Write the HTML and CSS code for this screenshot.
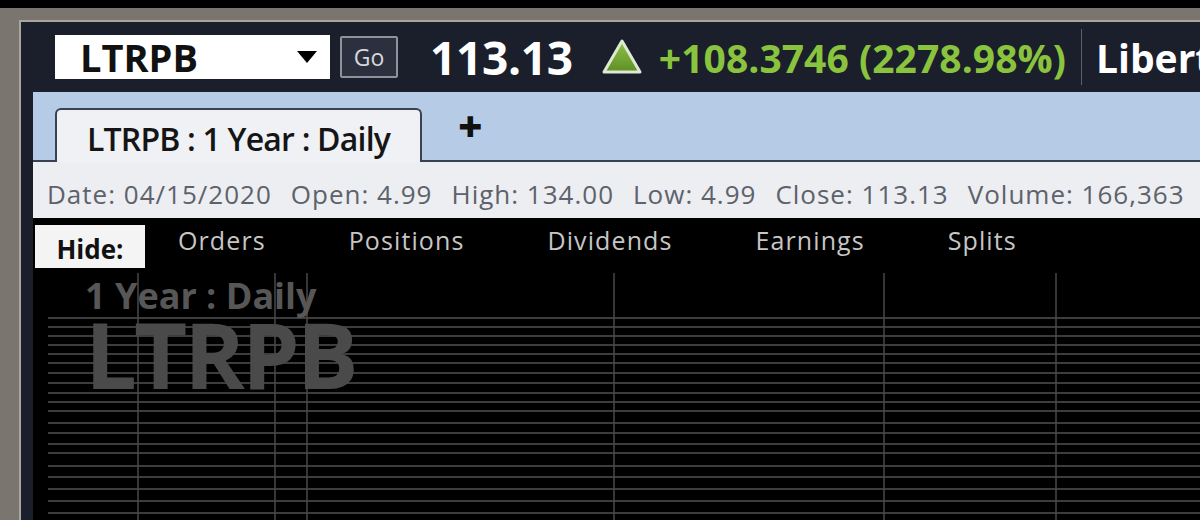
FILE: index.html
```html
<!DOCTYPE html>
<html>
<head>
<meta charset="utf-8">
<link rel="stylesheet" href="styles.css">
</head>
<body>
<div class="bezel">
  <div class="window">
    <div class="toolbar">
      <div class="symbol-box">
        <span class="symbol-text">LTRPB</span>
        <svg class="caret" width="22" height="14" viewBox="0 0 22 14"><path d="M1 1 L21 1 L11 13 Z" fill="#000"/></svg>
      </div>
      <div class="go-btn">Go</div>
      <div class="price">113.13</div>
      <svg class="up-icon" width="42" height="38" viewBox="0 0 42 38">
        <defs>
          <linearGradient id="g" x1="0" y1="0" x2="0" y2="1">
            <stop offset="0" stop-color="#8fc24a"/>
            <stop offset="1" stop-color="#5f8f26"/>
          </linearGradient>
        </defs>
        <path d="M21 3 L39 34 L3 34 Z" fill="url(#g)" stroke="#dfe8d2" stroke-width="3" stroke-linejoin="round"/>
      </svg>
      <div class="change">+108.3746 (2278.98%)</div>
      <div class="sep"></div>
      <div class="company">Liberty</div>
    </div>
    <div class="panel">
      <div class="tab-band">
        <div class="tab">LTRPB : 1 Year : Daily</div>
        <div class="add-tab">+</div>
      </div>
      <div class="info-bar">
        <span>Date: 04/15/2020</span>
        <span>Open: 4.99</span>
        <span>High: 134.00</span>
        <span>Low: 4.99</span>
        <span>Close: 113.13</span>
        <span>Volume: 166,363</span>
      </div>
      <div class="tools">
        <div class="hide-btn">Hide:</div>
        <div class="tool-items">
          <span>Orders</span>
          <span>Positions</span>
          <span>Dividends</span>
          <span>Earnings</span>
          <span>Splits</span>
        </div>
      </div>
      <div class="chart">
        <svg class="grid" width="1167" height="248" viewBox="0 0 1167 248">
          <g stroke="#3d3d3d" stroke-width="2">
            <line x1="15" x2="1167" y1="46" y2="46"/>
            <line x1="15" x2="1167" y1="55" y2="55"/>
            <line x1="15" x2="1167" y1="64" y2="64"/>
            <line x1="15" x2="1167" y1="73" y2="73"/>
            <line x1="15" x2="1167" y1="82" y2="82"/>
            <line x1="15" x2="1167" y1="91" y2="91"/>
            <line x1="15" x2="1167" y1="101" y2="101"/>
            <line x1="15" x2="1167" y1="111" y2="111"/>
            <line x1="15" x2="1167" y1="121" y2="121"/>
            <line x1="15" x2="1167" y1="130" y2="130"/>
            <line x1="15" x2="1167" y1="139" y2="139"/>
            <line x1="15" x2="1167" y1="151" y2="151"/>
            <line x1="15" x2="1167" y1="161" y2="161"/>
            <line x1="15" x2="1167" y1="172" y2="172"/>
            <line x1="15" x2="1167" y1="181" y2="181"/>
            <line x1="15" x2="1167" y1="194" y2="194"/>
            <line x1="15" x2="1167" y1="205" y2="205"/>
            <line x1="15" x2="1167" y1="217" y2="217"/>
            <line x1="15" x2="1167" y1="229" y2="229"/>
            <line x1="15" x2="1167" y1="241" y2="241"/>
          </g>
          <g stroke="#484848" stroke-width="1.5">
            <line x1="105" x2="105" y1="1" y2="248"/>
            <line x1="242" x2="242" y1="1" y2="248"/>
            <line x1="274" x2="274" y1="1" y2="248"/>
            <line x1="581" x2="581" y1="1" y2="248"/>
            <line x1="851" x2="851" y1="1" y2="248"/>
            <line x1="1023" x2="1023" y1="1" y2="248"/>
          </g>
        </svg>
        <div class="watermark">
          <div class="wm-period">1 Year : Daily</div>
          <div class="wm-symbol">LTRPB</div>
        </div>
      </div>
    </div>
  </div>
</div>
</body>
</html>
```

FILE: styles.css
```css
html, body {
  margin: 0;
  padding: 0;
  background: #000;
  overflow: hidden;
  width: 1200px;
  height: 520px;
}

.bezel {
  margin-top: 8px;
  height: 512px;
  background: #7a766f;
  padding: 12px 0 0 19px;
  box-sizing: border-box;
}

.window {
  height: 100%;
  background: #1b1e2b;
  border-top: 2px solid #aaa69e;
  border-left: 2px solid #aaa69e;
  display: flex;
  flex-direction: column;
  font-family: "Open Sans", "Liberation Sans", sans-serif;
  overflow: hidden;
}

/* Toolbar */
.toolbar {
  height: 70px;
  flex: none;
  display: flex;
  align-items: center;
  padding-left: 34px;
  white-space: nowrap;
  overflow: hidden;
}

.symbol-box {
  width: 275px;
  height: 44px;
  background: #fff;
  box-sizing: border-box;
  display: flex;
  align-items: center;
  padding: 0 12px 0 25px;
  justify-content: space-between;
  flex: none;
}

.symbol-text {
  font-size: 38px;
  font-weight: 700;
  color: #111;
}

.go-btn {
  margin-left: 10px;
  width: 58px;
  height: 42px;
  box-sizing: border-box;
  border: 2px solid #8e929c;
  border-radius: 2px;
  background: #2b2f3e;
  color: #d6d8dc;
  font-size: 23px;
  display: flex;
  align-items: center;
  justify-content: center;
  flex: none;
}

.price {
  margin-left: 32px;
  font-size: 46px;
  font-weight: 700;
  color: #fff;
  letter-spacing: -0.3px;
}

.up-icon {
  margin-left: 28px;
  flex: none;
}

.change {
  margin-left: 16px;
  font-size: 39px;
  font-weight: 700;
  color: #8ac43e;
  letter-spacing: 0.05px;
}

.sep {
  margin-left: 15px;
  width: 1px;
  height: 56px;
  background: #5b606c;
  flex: none;
}

.company {
  margin-left: 14px;
  font-size: 39px;
  font-weight: 700;
  color: #fff;
}

/* Panel */
.panel {
  margin-left: 12px;
  flex: 1;
  display: flex;
  flex-direction: column;
  min-height: 0;
}

.tab-band {
  height: 70px;
  flex: none;
  box-sizing: border-box;
  background: #b6cbe5;
  border-bottom: 2px solid #394152;
  display: flex;
  align-items: flex-end;
  padding-left: 22px;
}

.tab {
  width: 367px;
  height: 54px;
  box-sizing: border-box;
  margin-bottom: -2px;
  background: #eff1f5;
  border: 2px solid #394152;
  border-bottom: none;
  border-radius: 6px 6px 0 0;
  font-size: 32px;
  font-weight: 600;
  color: #151515;
  letter-spacing: -0.8px;
  display: flex;
  align-items: center;
  justify-content: center;
  padding-top: 4px;
}

.add-tab {
  margin-left: 36px;
  align-self: center;
  font-size: 42px;
  font-weight: 800;
  color: #111;
  line-height: 1;
}

.info-bar {
  height: 56px;
  flex: none;
  box-sizing: border-box;
  background: #eceef2;
  display: flex;
  align-items: center;
  gap: 19px;
  padding: 8px 0 0 14px;
  font-size: 26px;
  color: #5d626b;
  letter-spacing: 1px;
  white-space: nowrap;
}

.tools {
  height: 54px;
  flex: none;
  background: #000;
  display: flex;
  align-items: flex-start;
  padding-top: 7px;
  box-sizing: border-box;
  padding-left: 2px;
}

.hide-btn {
  width: 110px;
  height: 43px;
  background: #f4f4f4;
  color: #111;
  font-size: 26px;
  font-weight: 700;
  display: flex;
  align-items: center;
  justify-content: center;
  box-sizing: border-box;
  padding-top: 4px;
}

.tool-items {
  display: flex;
  gap: 83px;
  margin-left: 33px;
  font-size: 25px;
  color: #c6c6c6;
  letter-spacing: 1.1px;
  line-height: 1;
  padding-top: 3px;
}

.chart {
  flex: 1;
  background: #000;
  display: grid;
  overflow: hidden;
}

.grid,
.watermark {
  grid-area: 1 / 1;
}

.watermark {
  padding: 6px 0 0 52px;
  display: flex;
  flex-direction: column;
  align-items: flex-start;
  font-weight: 700;
  color: #575757;
  line-height: 1;
}

.wm-period {
  font-size: 36px;
}

.wm-symbol {
  font-size: 92px;
  letter-spacing: -3px;
  color: #4a4a4a;
  margin-top: -6px;
}
```
